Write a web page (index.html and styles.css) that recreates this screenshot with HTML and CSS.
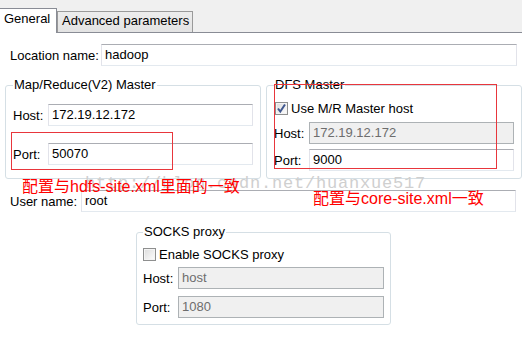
FILE: index.html
```html
<!DOCTYPE html>
<html lang="en">
<head>
    <meta charset="UTF-8">
    <title>Hadoop Location</title>
    <link rel="stylesheet" href="styles.css">
</head>
<body>
    <div class="tabs">
        <div class="tab active">General</div>
        <div class="tab">Advanced parameters</div>
    </div>
    <div class="page">
        <div class="row loc">
            <span class="label">Location name:</span>
            <span class="field">hadoop</span>
        </div>

        <div class="groups">
            <fieldset class="group mr">
                <legend>Map/Reduce(V2) Master</legend>
                <div class="row host">
                    <span class="label">Host:</span>
                    <span class="field">172.19.12.172</span>
                </div>
                <div class="row port">
                    <span class="label">Port:</span>
                    <span class="field">50070</span>
                </div>
            </fieldset>
            <fieldset class="group dfs">
                <legend>DFS Master</legend>
                <div class="check-row">
                    <span class="check checked">
                        <svg width="11" height="11" viewBox="0 0 11 11"><path d="M2 5.5 L4.3 8.5 L9 1.5" fill="none" stroke="#40588f" stroke-width="2"/></svg>
                    </span>
                    <span>Use M/R Master host</span>
                </div>
                <div class="row host">
                    <span class="label">Host:</span>
                    <span class="field disabled">172.19.12.172</span>
                </div>
                <div class="row port">
                    <span class="label">Port:</span>
                    <span class="field">9000</span>
                </div>
            </fieldset>
        </div>

        <div class="row user">
            <span class="label">User name:</span>
            <span class="field">root</span>
        </div>

        <fieldset class="group socks">
            <legend>SOCKS proxy</legend>
            <div class="check-row">
                <span class="check"></span>
                <span>Enable SOCKS proxy</span>
            </div>
            <div class="row host">
                <span class="label">Host:</span>
                <span class="field disabled">host</span>
            </div>
            <div class="row port">
                <span class="label">Port:</span>
                <span class="field disabled">1080</span>
            </div>
        </fieldset>

        <!-- annotations drawn over the dialog -->
        <div class="watermark">http://blog.csdn.net/huanxue517</div>
        <div class="mark mark-mr"></div>
        <div class="mark mark-dfs"></div>
        <div class="note note-hdfs">配置与hdfs-site.xml里面的一致</div>
        <div class="note note-core">配置与core-site.xml一致</div>
    </div>
</body>
</html>
```

FILE: styles.css
```css
* {
    box-sizing: border-box;
}
body {
    margin: 0;
    background: #fff;
    color: #000;
    font-family: "Liberation Sans", "Noto Sans CJK SC", sans-serif;
    font-size: 13px;
}
.tabs {
    display: flex;
    align-items: flex-end;
    height: 33px;
    background: #f0f0f0;
    border-bottom: 1px solid #898c95;
}
.tab {
    line-height: 16px;
    white-space: nowrap;
}
.tab.active {
    width: 57px;
    height: 25px;
    margin-bottom: -1px;
    padding: 2px 0 0 4px;
    background: #fff;
    border: 1px solid #898c95;
    border-left: none;
    border-bottom: none;
}
.tab:not(.active) {
    width: 136px;
    height: 21px;
    padding: 1px 0 0 4px;
    background: linear-gradient(#ededed, #e3e3e3);
    border: 1px solid #9a9a9a;
    border-bottom: none;
}
.page {
    position: relative;
    height: 318px;
    overflow: hidden;
}
.row {
    display: flex;
    align-items: center;
    height: 22px;
}
.label {
    flex: none;
    width: 35px;
}
.field {
    flex: 1;
    height: 22px;
    padding: 0 3px;
    line-height: 20px;
    background: #fff;
    border: 1px solid;
    border-color: #abadb3 #e2e3ea #e3e9ef #e2e3ea;
    white-space: nowrap;
}
.field.disabled {
    background: #f0f0f0;
    border-color: #adb2b5;
    color: #6d6d6d;
}
.loc {
    margin: 11px 5px 0 0;
}
.loc .label {
    width: 101px;
    padding-left: 10px;
}
.user {
    margin: 11px 6px 0 0;
}
.user .label {
    width: 81px;
    padding-left: 10px;
}
.groups {
    display: grid;
    grid-template-columns: 256px 256px;
    column-gap: 5px;
    margin: 11px 0 0 5px;
}
.group {
    margin: 0;
    padding: 0 7px;
    min-width: 0;
    height: 102px;
    border: 1px solid #d5dfe5;
    border-radius: 3px;
}
.group legend {
    padding: 0 1px;
    line-height: 16px;
}
.mr .host { margin-top: 11px; }
.mr .port { margin-top: 17px; }
.dfs .check-row { margin-top: 7px; }
.dfs .host { margin-top: 6px; }
.dfs .port { margin-top: 5px; }
.check-row {
    display: flex;
    align-items: center;
    gap: 3px;
    height: 16px;
}
.dfs .check {
    margin-left: 1px;
}
.check {
    display: flex;
    align-items: center;
    justify-content: center;
    width: 13px;
    height: 13px;
    border: 1px solid #8e8f8f;
    background: linear-gradient(135deg, #dcdcdc, #fdfdfd);
    box-shadow: inset 0 0 0 1px #f4f4f4;
}
.socks {
    width: 255px;
    height: 101px;
    margin: 12px 0 0 136px;
    padding: 0 6px;
}
.socks .check-row { margin-top: 6px; }
.socks .host { margin-top: 5px; }
.socks .port { margin-top: 7px; }
.watermark {
    position: absolute;
    left: 85px;
    top: 141px;
    font-family: "Liberation Mono", monospace;
    font-size: 17px;
    letter-spacing: 0.8px;
    line-height: 20px;
    color: #cfcfcf;
    white-space: nowrap;
}
.mark {
    position: absolute;
    border: 1px solid #e8363c;
}
.mark-mr {
    left: 11px;
    top: 99px;
    width: 162px;
    height: 38px;
}
.mark-dfs {
    left: 274px;
    top: 51px;
    width: 223px;
    height: 85px;
}
.note {
    position: absolute;
    font-size: 16px;
    line-height: 18px;
    color: #ff0000;
    white-space: nowrap;
}
.note-hdfs {
    left: 22px;
    top: 145px;
}
.note-core {
    left: 313px;
    top: 157px;
}
```
